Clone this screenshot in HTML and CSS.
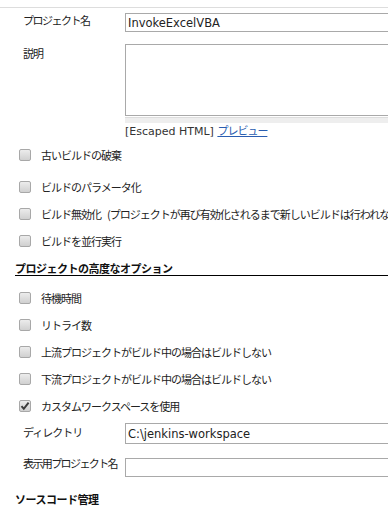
FILE: index.html
```html
<!DOCTYPE html>
<html lang="ja">
<head>
    <meta charset="UTF-8">
    <meta name="viewport" content="width=device-width, initial-scale=1.0">
    <title>InvokeExcelVBA の設定</title>
    <link rel="stylesheet" href="styles.css">
</head>
<body>

<div class="config">
    <div class="top-line"></div>

    <div class="field name-row">
        <label class="field-label" for="name">プロジェクト名</label>
        <input class="text-box" id="name" type="text" value="InvokeExcelVBA">
    </div>

    <div class="field desc-row">
        <label class="field-label" for="desc">説明</label>
        <div>
            <textarea class="desc-box" id="desc"></textarea>
            <div class="grip"></div>
            <div class="hint">[Escaped HTML] <a href="#">プレビュー</a></div>
        </div>
    </div>

    <ul class="options">
        <li class="option first"><span class="box"></span>古いビルドの破棄</li>
        <li class="option"><span class="box"></span>ビルドのパラメータ化</li>
        <li class="option"><span class="box"></span>ビルド無効化<span class="paren">(プロジェクトが再び有効化されるまで新しいビルドは行われない)</span></li>
        <li class="option"><span class="box"></span>ビルドを並行実行</li>
    </ul>

    <h3 class="section">プロジェクトの高度なオプション</h3>

    <ul class="options advanced">
        <li class="option"><span class="box"></span>待機時間</li>
        <li class="option"><span class="box"></span>リトライ数</li>
        <li class="option"><span class="box"></span>上流プロジェクトがビルド中の場合はビルドしない</li>
        <li class="option"><span class="box"></span>下流プロジェクトがビルド中の場合はビルドしない</li>
        <li class="option"><span class="box checked"><svg viewBox="0 0 12 12" width="12" height="12"><path d="M2.5 6.2 L4.8 8.8 L9.6 2.6" fill="none" stroke="#3c3c3c" stroke-width="2"/></svg></span>カスタムワークスペースを使用</li>
    </ul>

    <div class="field dir-row">
        <label class="field-label" for="dir">ディレクトリ</label>
        <input class="text-box" id="dir" type="text" value="C:\jenkins-workspace">
    </div>

    <div class="field display-row">
        <label class="field-label" for="display">表示用プロジェクト名</label>
        <input class="text-box" id="display" type="text" value="">
    </div>

    <h3 class="section scm">ソースコード管理</h3>
</div>

</body>
</html>
```

FILE: styles.css
```css
body {
    margin: 0;
    background-color: #ffffff;
    color: #222222;
    font-family: 'Noto Sans CJK JP', 'DejaVu Sans', sans-serif;
    font-size: 11px;
    overflow: hidden;
}
.config {
    width: 388px;
    overflow: hidden;
}
.top-line {
    margin-top: 7px;
    height: 1px;
    background-color: #dddddd;
}
.field {
    display: grid;
    grid-template-columns: 102px 300px;
    padding-left: 23px;
}
.field-label {
    line-height: 11px;
    letter-spacing: -1px;
    white-space: nowrap;
}
.text-box {
    box-sizing: border-box;
    display: block;
    width: 300px;
    height: 19px;
    margin: 0;
    padding: 0 2px;
    border: 1px solid #a9a9a9;
    border-radius: 0;
    font-family: 'DejaVu Sans', sans-serif;
    font-size: 11.5px;
    color: #222222;
    outline: none;
}
.name-row {
    margin-top: 5px;
}
.name-row .field-label {
    padding-top: 2px;
    letter-spacing: -1.5px;
}
.desc-row {
    margin-top: 12px;
}
.desc-row .field-label {
    padding-top: 4px;
}
.desc-box {
    box-sizing: border-box;
    display: block;
    width: 300px;
    height: 72px;
    margin: 0;
    border: 1px solid #a9a9a9;
    border-radius: 0;
    resize: none;
    outline: none;
}
.grip {
    margin-top: 1px;
    height: 5px;
    background-color: #eeeeee;
    border-top: 1px solid #dddddd;
}
.hint {
    margin-top: 1px;
    line-height: 13px;
    font-family: 'DejaVu Sans', sans-serif;
    font-size: 11px;
    color: #333333;
    white-space: nowrap;
}
.hint a {
    font-family: 'Noto Sans CJK JP', sans-serif;
    letter-spacing: -1px;
    color: #2a5db0;
}
.options {
    list-style: none;
    margin: 3px 0 0 0;
    padding: 0 0 0 19px;
}
.option {
    display: flex;
    align-items: center;
    height: 27px;
    letter-spacing: -1px;
    white-space: nowrap;
}
.option.first {
    margin-bottom: 5px;
}
.paren {
    margin-left: 6px;
}
.box {
    box-sizing: border-box;
    flex: none;
    width: 12px;
    height: 12px;
    margin-right: 10px;
    border: 1px solid #a8a8a8;
    border-radius: 2px;
    background: linear-gradient(#ececec, #d0d0d0);
}
.box svg {
    display: block;
    margin: -1px 0 0 -1px;
}
.section {
    margin: 8px 0 0 15px;
    line-height: 13px;
    font-size: 11px;
    font-weight: bold;
    letter-spacing: -0.5px;
    color: #111111;
    border-bottom: 1px solid #000000;
    white-space: nowrap;
}
.options.advanced {
    margin-top: 8px;
}
.dir-row {
    margin-top: 4px;
}
.dir-row .text-box {
    height: 21px;
}
.dir-row .field-label {
    padding-top: 4px;
}
.display-row {
    margin-top: 14px;
}
.display-row .field-label {
    padding-top: 0;
    letter-spacing: -1.6px;
}
.section.scm {
    margin-top: 16px;
    border-bottom: none;
}
```
